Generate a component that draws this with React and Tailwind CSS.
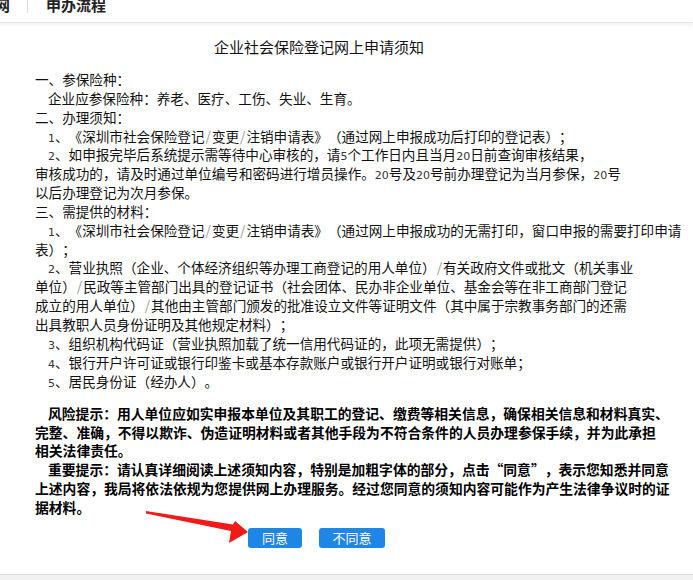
import React from "react";

const N = ({ children }) => (
  <span className="text-[11px] leading-none text-[#333]" style={{ fontFamily: "Tahoma, 'DejaVu Sans', sans-serif" }}>
    {children}
  </span>
);

const Sl = () => <span className="px-[1px] leading-none text-[#999]">/</span>;

const noticeLines = [
  { indent: false, text: "一、参保险种：" },
  { indent: true, text: "企业应参保险种：养老、医疗、工伤、失业、生育。" },
  { indent: false, text: "二、办理须知：" },
  {
    indent: true,
    text: (
      <>
        <N>1</N>、《深圳市社会保险登记<Sl />变更<Sl />注销申请表》（通过网上申报成功后打印的登记表）；
      </>
    ),
  },
  {
    indent: true,
    text: (
      <>
        <N>2</N>、如申报完毕后系统提示需等待中心审核的，请<N>5</N>个工作日内且当月<N>20</N>日前查询审核结果，
      </>
    ),
  },
  {
    indent: false,
    text: (
      <>
        审核成功的，请及时通过单位编号和密码进行增员操作。<N>20</N>号及<N>20</N>号前办理登记为当月参保，<N>20</N>号
      </>
    ),
  },
  { indent: false, text: "以后办理登记为次月参保。" },
  { indent: false, text: "三、需提供的材料：" },
  {
    indent: true,
    text: (
      <>
        <N>1</N>、《深圳市社会保险登记<Sl />变更<Sl />注销申请表》（通过网上申报成功的无需打印，窗口申报的需要打印申请
      </>
    ),
  },
  { indent: false, text: "表）；" },
  {
    indent: true,
    text: (
      <>
        <N>2</N>、营业执照（企业、个体经济组织等办理工商登记的用人单位）<Sl />有关政府文件或批文（机关事业
      </>
    ),
  },
  {
    indent: false,
    text: (
      <>
        单位）<Sl />民政等主管部门出具的登记证书（社会团体、民办非企业单位、基金会等在非工商部门登记
      </>
    ),
  },
  {
    indent: false,
    text: (
      <>
        成立的用人单位）<Sl />其他由主管部门颁发的批准设立文件等证明文件（其中属于宗教事务部门的还需
      </>
    ),
  },
  { indent: false, text: "出具教职人员身份证明及其他规定材料）；" },
  {
    indent: true,
    text: (
      <>
        <N>3</N>、组织机构代码证（营业执照加载了统一信用代码证的，此项无需提供）；
      </>
    ),
  },
  {
    indent: true,
    text: (
      <>
        <N>4</N>、银行开户许可证或银行印鉴卡或基本存款账户或银行开户证明或银行对账单；
      </>
    ),
  },
  {
    indent: true,
    text: (
      <>
        <N>5</N>、居民身份证（经办人）。
      </>
    ),
  },
];

const boldLines = [
  { indent: true, text: "风险提示：用人单位应如实申报本单位及其职工的登记、缴费等相关信息，确保相关信息和材料真实、" },
  { indent: false, text: "完整、准确，不得以欺诈、伪造证明材料或者其他手段为不符合条件的人员办理参保手续，并为此承担" },
  { indent: false, text: "相关法律责任。" },
  { indent: true, text: "重要提示：请认真详细阅读上述须知内容，特别是加粗字体的部分，点击“同意”，表示您知悉并同意" },
  { indent: false, text: "上述内容，我局将依法依规为您提供网上办理服务。经过您同意的须知内容可能作为产生法律争议时的证" },
  { indent: false, text: "据材料。" },
];

const cjk = { fontFamily: "'Noto Sans CJK SC', 'Noto Sans', sans-serif" };

export default function App() {
  return (
    <div
      className="relative flex h-[580px] w-[693px] flex-col overflow-hidden bg-white text-black [text-spacing-trim:space-all]"
      style={cjk}
    >
      {/* HEADER */}
      <div className="h-[23px] shrink-0 overflow-hidden border-b border-[#e6e6e6] shadow-[0_2px_3px_rgba(0,0,0,0.06)]">
        <div className="-ml-[5px] -mt-[3px] flex items-center text-[15px] font-bold leading-[16px] text-[#222]">
          <span>网</span>
          <span className="ml-[17px] mr-[18px] h-[16px] w-px bg-[#dcdcdc]" />
          <span>申办流程</span>
        </div>
      </div>

      {/* CONTENT */}
      <div className="flex-1 pl-[35px]">
        <div className="mt-[14px] whitespace-nowrap pl-[179px] text-[15px] leading-[20px] text-[#111]">
          企业社会保险登记网上申请须知
        </div>

        <div className="mt-[13px] text-[13.6px] leading-[18.85px] text-[#111]">
          {noticeLines.map((line, i) => (
            <div key={i} className={`h-[18.85px] whitespace-nowrap ${line.indent ? "pl-[13px]" : ""}`}>
              {line.text}
            </div>
          ))}
        </div>

        <div className="mt-[13.5px] text-[13.8px] font-bold leading-[18.8px] text-black">
          {boldLines.map((line, i) => (
            <div key={i} className={`h-[18.8px] whitespace-nowrap ${line.indent ? "pl-[13px]" : ""}`}>
              {line.text}
            </div>
          ))}
        </div>

        <div className="mt-[11px] flex gap-[17px] pl-[213px]">
          <button className="h-[20px] w-[54px] rounded-[3px] bg-[#2086e6] text-[13px] leading-[20px] text-white">
            同意
          </button>
          <button className="h-[20px] w-[66px] rounded-[3px] bg-[#2086e6] text-[13px] leading-[20px] text-white">
            不同意
          </button>
        </div>
      </div>

      {/* FOOTER strip */}
      <div className="h-[6px] shrink-0 border-t border-[#dadada] bg-[#f1f1f1]" />

      {/* red arrow annotation */}
      <svg className="pointer-events-none absolute left-0 top-0" width="693" height="580">
        <polygon
          points="146,511 233,524.5 235,521 248,532 229,543 231,531 146,513.5"
          fill="#f01a1a"
        />
      </svg>
    </div>
  );
}
